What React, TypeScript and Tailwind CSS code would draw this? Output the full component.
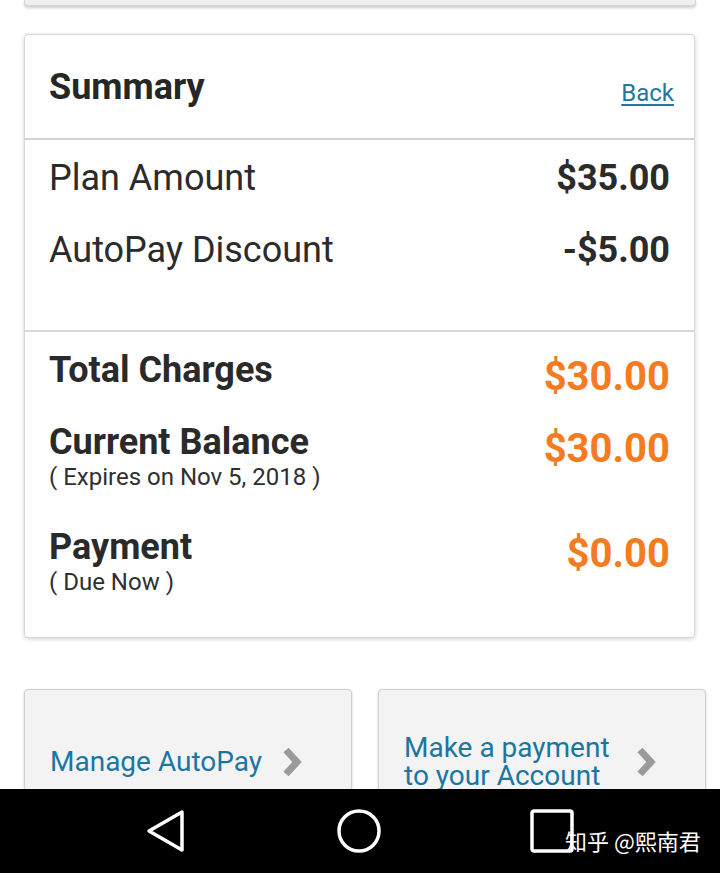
import type { ReactNode } from 'react'

const ROBOTO = { fontFamily: 'Roboto, "Noto Sans", sans-serif' }

function Chevron() {
  return (
    <svg width="22" height="30" viewBox="0 0 22 30" className="shrink-0">
      <polyline points="5,3 16,15 5,27" fill="none" stroke="#9a9a9a" strokeWidth="7" strokeLinejoin="miter" />
    </svg>
  )
}

function ActionCard({ children }: { children: ReactNode }) {
  return (
    <div className="w-[328px] h-[146px] shrink-0 rounded-[4px] border border-[#cfcfcf] bg-[#f3f3f3] shadow-[0_1px_3px_rgba(0,0,0,0.18)] flex items-center">
      <div className="w-[256px] pl-[25px] text-[28px] leading-[28px] text-[#1b76a2]">{children}</div>
      <Chevron />
    </div>
  )
}

function AmountRow({ label, sub, amount, h }: { label: string; sub?: string; amount: string; h: string }) {
  return (
    <div className={`flex justify-between items-start ${h}`}>
      <div>
        <div className="text-[36px] leading-[40px] font-bold text-[#2a2a2a]">{label}</div>
        {sub && <div className="text-[24px] leading-[30px] text-[#2f2f2f]">{sub}</div>}
      </div>
      <div className="mt-[5px] text-[40px] leading-[44px] font-bold text-[#f47b20]">{amount}</div>
    </div>
  )
}

export default function App() {
  return (
    <div className="w-[720px] h-[873px] bg-white flex flex-col overflow-hidden relative" style={ROBOTO}>
      <div className="flex-1 overflow-hidden">
        {/* previous card, scrolled off */}
        <div className="mx-[24px] h-[6px] bg-[#efefef] border-x border-b border-[#d4d4d4] rounded-b-[4px] shadow-[0_2px_3px_rgba(0,0,0,0.2)]" />

        {/* Summary card */}
        <div className="mx-[24px] mt-[28px] w-[671px] rounded-[4px] border border-[#d8d8d8] bg-white shadow-[0_1px_4px_rgba(0,0,0,0.18)]">
          <div className="h-[105px] px-[24px] flex items-center justify-between border-b-2 border-[#d2d2d2]">
            <span className="text-[36px] font-bold text-[#262626]">Summary</span>
            <a className="mt-[12px] mr-[-4px] text-[24px] text-[#1f78a3] underline underline-offset-[3px]">Back</a>
          </div>

          <div className="px-[24px] pt-[2px] pb-[44px] border-b-2 border-[#d8d8d8]">
            {[
              ['Plan Amount', '$35.00'],
              ['AutoPay Discount', '-$5.00'],
            ].map(([l, v]) => (
              <div key={l} className="h-[72px] flex items-center justify-between">
                <span className="text-[36px] text-[#2b2b2b]">{l}</span>
                <span className="text-[36px] font-bold text-[#2b2b2b]">{v}</span>
              </div>
            ))}
          </div>

          <div className="px-[24px] pt-[18px] pb-[40px]">
            <AmountRow label="Total Charges" amount="$30.00" h="h-[72px]" />
            <AmountRow label="Current Balance" sub="( Expires on Nov 5, 2018 )" amount="$30.00" h="h-[105px]" />
            <AmountRow label="Payment" sub="( Due Now )" amount="$0.00" h="h-[70px]" />
          </div>
        </div>

        {/* Action cards */}
        <div className="mt-[51px] pl-[24px] flex gap-[26px]">
          <ActionCard>Manage AutoPay</ActionCard>
          <ActionCard>
            Make a payment
            <br />
            to your Account
          </ActionCard>
        </div>
      </div>

      {/* Android nav bar */}
      <div className="h-[84px] bg-black flex items-center justify-center gap-[148px] shrink-0">
        <svg width="42" height="44" viewBox="0 0 42 44">
          <polygon points="36,3 36,41 3,22" fill="none" stroke="white" strokeWidth="3.5" strokeLinejoin="round" />
        </svg>
        <svg width="46" height="46" viewBox="0 0 46 46">
          <circle cx="23" cy="23" r="20" fill="none" stroke="white" strokeWidth="3.5" />
        </svg>
        <svg width="44" height="44" viewBox="0 0 44 44">
          <rect x="2" y="2" width="40" height="40" rx="2" fill="none" stroke="white" strokeWidth="3.5" />
        </svg>
      </div>

      {/* watermark */}
      <div
        className="absolute left-[565px] top-[826px] text-[22px] leading-[28px] text-white whitespace-nowrap"
        style={{ fontFamily: '"Noto Sans CJK SC", "Noto Sans", sans-serif' }}
      >
        知乎 @熙南君
      </div>
    </div>
  )
}
